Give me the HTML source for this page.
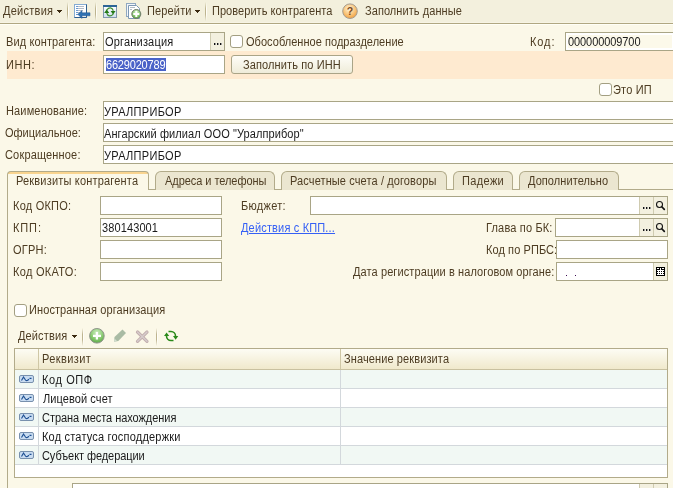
<!DOCTYPE html>
<html><head><meta charset="utf-8">
<style>
*{margin:0;padding:0;box-sizing:border-box}
html,body{width:673px;height:488px;overflow:hidden;background:#fbf8e8}
body{position:relative;font:11px/13px "Liberation Sans",sans-serif;color:#4d3c22}
.a{position:absolute}
.t{position:absolute;white-space:pre;line-height:15px;font-size:12px;transform:scaleX(.917);transform-origin:0 0}
.k{color:#1a1a1a}
.inp{position:absolute;background:#fff;border:1px solid #a9a586}
.btn3{position:absolute;background:#f3f0df;border-left:1px solid #cfcbb0}
.dots{position:absolute;width:8px;height:2px;background:
 linear-gradient(90deg,#111 0 1px,#999 1px 2px,transparent 2px 3px,#111 3px 4px,#999 4px 5px,transparent 5px 6px,#111 6px 7px,#999 7px 8px)}
.cb{position:absolute;width:13px;height:13px;border:1px solid #a39f82;border-radius:3px;background:#fff}
.sep{position:absolute;width:2px;background:linear-gradient(90deg,#bdb48f 0 1px,#fffef8 1px 2px);-webkit-mask-image:linear-gradient(transparent,#000 35%,#000 65%,transparent);mask-image:linear-gradient(transparent,#000 35%,#000 65%,transparent)}
.tri{position:absolute;width:5px;height:3px;background:linear-gradient(#3b2a10,#3b2a10) 0 0/5px 1px no-repeat,linear-gradient(#3b2a10,#3b2a10) 1px 1px/3px 1px no-repeat,linear-gradient(#3b2a10,#3b2a10) 2px 2px/1px 1px no-repeat}
.tab{position:absolute;top:171px;height:19px;border:1px solid #b2ab8a;border-bottom:none;border-radius:6px 6px 0 0;background:#ebe6d0}
</style></head><body>

<!-- top toolbar -->
<div class="a" style="left:0;top:0;width:673px;height:22px;background:#f3f0dd"></div>
<div class="a" style="left:0;top:22px;width:673px;height:1px;background:#f7f4e4"></div>
<div class="a" style="left:0;top:23px;width:673px;height:1px;background:#b0a781"></div>
<div class="a" style="left:0;top:24px;width:673px;height:1px;background:#fffff6"></div>

<div class="t" style="left:3px;top:4px;letter-spacing:0.28px">Действия</div>
<div class="tri" style="left:57px;top:10px"></div>
<div class="sep" style="left:67px;top:2px;height:19px"></div>
<div class="sep" style="left:95px;top:2px;height:19px"></div>
<div class="t" style="left:147px;top:4px;letter-spacing:0.16px">Перейти</div>
<div class="tri" style="left:195px;top:10px"></div>
<div class="sep" style="left:205px;top:2px;height:19px"></div>
<div class="t" style="left:212px;top:4px;letter-spacing:0.05px">Проверить контрагента</div>
<div class="t" style="left:365px;top:4px;letter-spacing:0.07px">Заполнить данные</div>

<!-- header fields -->
<div class="a" style="left:7px;top:51px;width:666px;height:28px;background:#feead0"></div>
<div class="t" style="left:6px;top:35px;letter-spacing:0.13px">Вид контрагента:</div>
<div class="inp" style="left:103px;top:32px;width:122px;height:19px"></div>
<div class="t k" style="left:105px;top:35px;letter-spacing:0.2px">Организация</div>
<div class="btn3" style="left:210px;top:33px;width:14px;height:17px"></div>
<div class="dots" style="left:214px;top:43px"></div>
<div class="cb" style="left:230px;top:35px"></div>
<div class="t" style="left:246px;top:35px;letter-spacing:0.04px">Обособленное подразделение</div>
<div class="t" style="left:530px;top:35px;letter-spacing:0.98px">Код:</div>
<div class="inp" style="left:565px;top:32px;width:120px;height:19px;border-width:1px"></div>
<div class="a" style="left:568px;top:35px;width:104px;height:13px;background:#fcf9ea"></div>
<div class="t k" style="left:568px;top:35px;letter-spacing:-0.09px">000000009700</div>

<div class="t" style="left:6px;top:58px;letter-spacing:0.65px">ИНН:</div>
<div class="inp" style="left:103px;top:55px;width:122px;height:19px"></div>
<div class="a" style="left:106px;top:58px;width:60px;height:13px;background:#4a62c8"></div>
<div class="t" style="left:106px;top:58px;color:#fff;letter-spacing:-0.2px">6629020789</div>
<div class="a" style="left:231px;top:55px;width:122px;height:19px;border:1px solid #aaa487;border-radius:3px;background:linear-gradient(#fefdf8,#efecd9)"></div>
<div class="t" style="left:243px;top:58px;letter-spacing:0.13px">Заполнить по ИНН</div>

<div class="cb" style="left:599px;top:83px"></div>
<div class="t" style="left:613px;top:83px;letter-spacing:0.2px">Это ИП</div>

<div class="t" style="left:6px;top:104px;letter-spacing:0.16px">Наименование:</div>
<div class="inp" style="left:103px;top:101px;width:580px;height:19px"></div>
<div class="t k" style="left:104px;top:105px;letter-spacing:0.33px">УРАЛПРИБОР</div>
<div class="t" style="left:5px;top:126px">Официальное:</div>
<div class="inp" style="left:103px;top:123px;width:580px;height:19px"></div>
<div class="t k" style="left:104px;top:127px;letter-spacing:0.09px">Ангарский филиал ООО "Уралприбор"</div>
<div class="t" style="left:5px;top:148px;letter-spacing:0.18px">Сокращенное:</div>
<div class="inp" style="left:103px;top:145px;width:580px;height:19px"></div>
<div class="t k" style="left:104px;top:149px;letter-spacing:0.33px">УРАЛПРИБОР</div>

<!-- tabs -->
<div class="a" style="left:7px;top:189px;width:666px;height:1px;background:#b2ab8a"></div>
<div class="a" style="left:7px;top:176px;width:1px;height:312px;background:#b2ab8a"></div>
<div class="tab" style="left:155px;width:120px"></div>
<div class="tab" style="left:281px;width:166px"></div>
<div class="tab" style="left:453px;width:60px"></div>
<div class="tab" style="left:519px;width:100px"></div>
<div class="tab" style="left:7px;width:142px;height:19px;border-radius:4px 4px 0 0;background:linear-gradient(#f9d48f 0 2px,#fbf8e8 2px)"></div>
<div class="t" style="left:16px;top:174px;letter-spacing:0.2px">Реквизиты контрагента</div>
<div class="t" style="left:165px;top:174px;letter-spacing:-0.06px">Адреса и телефоны</div>
<div class="t" style="left:290px;top:174px;letter-spacing:0.12px">Расчетные счета / договоры</div>
<div class="t" style="left:462px;top:174px;letter-spacing:0.39px">Падежи</div>
<div class="t" style="left:528px;top:174px;letter-spacing:0.08px">Дополнительно</div>

<!-- page 1 fields -->
<div class="t" style="left:13px;top:199px;letter-spacing:0.25px">Код ОКПО:</div>
<div class="inp" style="left:100px;top:196px;width:122px;height:19px"></div>
<div class="t" style="left:13px;top:221px;letter-spacing:0.98px">КПП:</div>
<div class="inp" style="left:100px;top:218px;width:122px;height:19px"></div>
<div class="t k" style="left:102px;top:221px;letter-spacing:0.12px">380143001</div>
<div class="t" style="left:13px;top:243px;letter-spacing:0.25px">ОГРН:</div>
<div class="inp" style="left:100px;top:240px;width:122px;height:19px"></div>
<div class="t" style="left:13px;top:265px;letter-spacing:0.33px">Код ОКАТО:</div>
<div class="inp" style="left:100px;top:262px;width:122px;height:19px"></div>

<div class="t" style="left:241px;top:199px;letter-spacing:0.33px">Бюджет:</div>
<div class="inp" style="left:310px;top:196px;width:358px;height:19px"></div>
<div class="btn3" style="left:639px;top:197px;width:14px;height:17px"></div>
<div class="btn3" style="left:653px;top:197px;width:14px;height:17px"></div>
<div class="dots" style="left:643px;top:207px"></div>
<div class="t" style="left:241px;top:221px;color:#3560f5;text-decoration:underline;letter-spacing:0.18px">Действия с КПП...</div>

<div class="t" style="left:486px;top:221px;letter-spacing:0.18px">Глава по БК:</div>
<div class="inp" style="left:555px;top:218px;width:113px;height:19px"></div>
<div class="btn3" style="left:639px;top:219px;width:14px;height:17px"></div>
<div class="btn3" style="left:653px;top:219px;width:14px;height:17px"></div>
<div class="dots" style="left:643px;top:229px"></div>
<div class="t" style="left:486px;top:243px;letter-spacing:0.09px">Код по РПБС:</div>
<div class="inp" style="left:556px;top:240px;width:112px;height:19px"></div>
<div class="t" style="left:353px;top:265px;letter-spacing:0.11px">Дата регистрации в налоговом органе:</div>
<div class="inp" style="left:556px;top:262px;width:112px;height:19px"></div>
<div class="btn3" style="left:653px;top:263px;width:14px;height:17px"></div>

<div class="cb" style="left:14px;top:304px"></div>
<div class="t" style="left:29px;top:303px;letter-spacing:0.1px">Иностранная организация</div>

<!-- table toolbar -->
<div class="t" style="left:18px;top:329px;letter-spacing:0.14px">Действия</div>
<div class="tri" style="left:72px;top:335px"></div>
<div class="sep" style="left:82px;top:328px;height:18px"></div>
<div class="sep" style="left:156px;top:328px;height:18px"></div>

<!-- table -->
<div class="a" style="left:14px;top:348px;width:654px;height:130px;border:1px solid #b2ab8a;background:#fff"></div>
<div class="a" style="left:15px;top:349px;width:652px;height:21px;background:linear-gradient(#fdfcf4,#f0e9cc);border-bottom:1px solid #c9c1a0"></div>
<div class="a" style="left:38px;top:349px;width:1px;height:20px;background:#cfc7a6"></div>
<div class="a" style="left:340px;top:349px;width:1px;height:20px;background:#cfc7a6"></div>
<div class="t" style="left:42px;top:352px;letter-spacing:0.42px">Реквизит</div>
<div class="t" style="left:344px;top:352px;letter-spacing:0.12px">Значение реквизита</div>
<div class="a" style="left:15px;top:370px;width:652px;height:18px;background:#f1f8f4"></div>
<div class="a" style="left:15px;top:388px;width:652px;height:1px;background:#d3d8dc"></div>
<div class="a" style="left:38px;top:370px;width:1px;height:18px;background:#d3d8dc"></div>
<div class="a" style="left:340px;top:370px;width:1px;height:18px;background:#d3d8dc"></div>
<div class="t k" style="left:42px;top:373px;letter-spacing:0.65px">Код ОПФ</div>
<div class="a" style="left:15px;top:389px;width:652px;height:18px;background:#ffffff"></div>
<div class="a" style="left:15px;top:407px;width:652px;height:1px;background:#d3d8dc"></div>
<div class="a" style="left:38px;top:389px;width:1px;height:18px;background:#d3d8dc"></div>
<div class="a" style="left:340px;top:389px;width:1px;height:18px;background:#d3d8dc"></div>
<div class="t k" style="left:43px;top:392px;letter-spacing:0.09px">Лицевой счет</div>
<div class="a" style="left:15px;top:408px;width:652px;height:18px;background:#f1f8f4"></div>
<div class="a" style="left:15px;top:426px;width:652px;height:1px;background:#d3d8dc"></div>
<div class="a" style="left:38px;top:408px;width:1px;height:18px;background:#d3d8dc"></div>
<div class="a" style="left:340px;top:408px;width:1px;height:18px;background:#d3d8dc"></div>
<div class="t k" style="left:42px;top:411px;letter-spacing:-0.05px">Страна места нахождения</div>
<div class="a" style="left:15px;top:427px;width:652px;height:18px;background:#ffffff"></div>
<div class="a" style="left:15px;top:445px;width:652px;height:1px;background:#d3d8dc"></div>
<div class="a" style="left:38px;top:427px;width:1px;height:18px;background:#d3d8dc"></div>
<div class="a" style="left:340px;top:427px;width:1px;height:18px;background:#d3d8dc"></div>
<div class="t k" style="left:42px;top:430px;letter-spacing:0.21px">Код статуса господдержки</div>
<div class="a" style="left:15px;top:446px;width:652px;height:18px;background:#f1f8f4"></div>
<div class="a" style="left:15px;top:464px;width:652px;height:1px;background:#d3d8dc"></div>
<div class="a" style="left:38px;top:446px;width:1px;height:18px;background:#d3d8dc"></div>
<div class="a" style="left:340px;top:446px;width:1px;height:18px;background:#d3d8dc"></div>
<div class="t k" style="left:42px;top:449px;letter-spacing:-0.08px">Субъект федерации</div>

<!-- bottom field -->
<div class="inp" style="left:72px;top:483px;width:596px;height:10px"></div>
<div class="btn3" style="left:639px;top:484px;width:14px;height:10px"></div>
<div class="btn3" style="left:653px;top:484px;width:14px;height:10px"></div>
<svg class="a" style="left:0;top:0" width="673" height="488" viewBox="0 0 673 488">
<defs>
<linearGradient id="gwin" x1="0" y1="0" x2="0" y2="1"><stop offset="0" stop-color="#ffffff"/><stop offset="1" stop-color="#cfdff0"/></linearGradient>
<radialGradient id="gq" cx="0.45" cy="0.35" r="0.65"><stop offset="0" stop-color="#fff4dc"/><stop offset="0.6" stop-color="#f9c57a"/><stop offset="1" stop-color="#f0a040"/></radialGradient>
<radialGradient id="gg" cx="0.5" cy="0.3" r="0.7"><stop offset="0" stop-color="#d2efc6"/><stop offset="0.6" stop-color="#8acb72"/><stop offset="1" stop-color="#5daa47"/></radialGradient>
</defs>
<!-- icon1 doc+arrow -->
<rect x="74.5" y="4.5" width="12" height="13" fill="#fff" stroke="#86acd2"/>
<path d="M86.5 4.5 V17.5 H74.5" fill="none" stroke="#2f5f8f"/>
<g stroke-width="1">
<path d="M76 6.5h2M76 8.5h2M76 10.5h2M76 12.5h2M76 14.5h2" stroke="#6a9ad0"/>
<path d="M78 6.5h6M78 8.5h6M78 10.5h5M78 12.5h2" stroke="#b4bcc6"/>
</g>
<path d="M77.8 14.3 L82 10.6 V12.8 H90 V15.8 H82 V18.4 Z" fill="#2f72b2" stroke="#24598e" stroke-width="0.5"/>
<!-- icon2 window -->
<rect x="103.5" y="5.5" width="13" height="12" fill="url(#gwin)" stroke="#8197ad"/>
<rect x="103" y="5" width="14" height="2" fill="#2d6596"/>
<path d="M106.8 10 Q108.5 7.6 110.5 7.9 Q112.5 8.2 113.3 10.8 M113.2 14 Q111.5 16.2 109.5 15.9 Q107.5 15.6 106.7 13" fill="none" stroke="#3f8f30" stroke-width="1.2"/>
<path d="M104.2 12.9 H109.2 L106.7 9.3 Z M110.6 10.9 H115.6 L113.1 14.5 Z" fill="#267a18"/>
<!-- icon3 copy + plus -->
<rect x="126.5" y="3.5" width="9" height="13" fill="#f3f6fa" stroke="#90a8c0"/>
<path d="M128.5 5.5 H136.5 L139.5 8.5 V18.5 H128.5 Z" fill="#fff" stroke="#7c98b4"/>
<path d="M130 7.5h5M130 9.5h2" stroke="#b4bcc6"/>
<circle cx="136.3" cy="14" r="4.5" fill="url(#gg)" stroke="#6f7a6a"/>
<path d="M133.3 14h6M136.3 11v6" stroke="#fff" stroke-width="2"/>
<!-- question -->
<circle cx="350" cy="11.2" r="7.3" fill="url(#gq)" stroke="#a49c90"/>
<text x="350" y="14.8" text-anchor="middle" font-family="Liberation Sans" font-weight="bold" font-size="10.5" fill="#7b4a20">?</text>
<!-- table toolbar -->
<circle cx="96.9" cy="335.8" r="7.3" fill="url(#gg)" stroke="#8f948a"/>
<path d="M93 335.8h8M96.9 332v7.6" stroke="#fff" stroke-width="2.2"/>
<path d="M114 341.7 L114.5 337 L122.5 329.5 L126 333 L118.3 341 Z" fill="#a9bba4"/>
<path d="M114 341.7 L114.5 338.5 L117 341 Z" fill="#d4dfd0"/>
<path d="M137.5 332 L147 341.3 M147 332 L137.5 341.3" stroke="#c2aeae" stroke-width="3.2" stroke-linecap="round"/>
<path d="M137.5 332 L147 341.3 M147 332 L137.5 341.3" stroke="#d6cccc" stroke-width="1.3" stroke-linecap="round"/>
<path d="M168.5 331.5 H171 A4.5 4.5 0 0 1 175.5 336 M173.5 340.5 H171 A4.5 4.5 0 0 1 166.5 336" fill="none" stroke="#2a8a1a" stroke-width="1.6"/>
<path d="M173 336 H178.3 L175.6 339.8 Z M164 336 H169.2 L166.6 332.4 Z" fill="#2a8a1a"/>
<!-- magnifiers -->
<circle cx="659.5" cy="204.5" r="3" fill="none" stroke="#111" stroke-width="1.05"/>
<path d="M662 207 L664.3 209.3" stroke="#111" stroke-width="1.7" stroke-linecap="round"/>
<circle cx="659.5" cy="226.5" r="3" fill="none" stroke="#111" stroke-width="1.05"/>
<path d="M662 229 L664.3 231.3" stroke="#111" stroke-width="1.7" stroke-linecap="round"/>
<!-- calendar -->
<rect x="656" y="267" width="9" height="9" fill="#000"/>
<rect x="657" y="268" width="2" height="1" fill="#fff"/><rect x="662" y="268" width="2" height="1" fill="#fff"/><rect x="660" y="268" width="1" height="2" fill="#fff"/>
<rect x="657" y="270" width="7" height="5" fill="#fff"/>
<rect x="659" y="271" width="1" height="1" fill="#000"/><rect x="661" y="271" width="1" height="1" fill="#000"/>
<rect x="659" y="273" width="1" height="1" fill="#000"/><rect x="661" y="273" width="1" height="1" fill="#000"/>
<rect x="657" y="271" width="1" height="1" fill="#000"/><rect x="663" y="271" width="1" height="1" fill="#000"/>
<rect x="657" y="273" width="1" height="1" fill="#000"/><rect x="663" y="273" width="1" height="1" fill="#000"/>
<rect x="566" y="275" width="1" height="1" fill="#3a0a50"/><rect x="575" y="275" width="1" height="1" fill="#3a0a50"/>
<rect x="19.5" y="375.5" width="14" height="7" rx="1.5" fill="#c9dcf1" stroke="#7890ad"/>
<path d="M21.5 380.5 L23.5 377 L25.5 380 Q26.5 381.3 28 380 L29 379.2 M29.5 378.3 L31.5 378.3" fill="none" stroke="#1d4f92" stroke-width="1.15"/>
<rect x="19.5" y="394.5" width="14" height="7" rx="1.5" fill="#c9dcf1" stroke="#7890ad"/>
<path d="M21.5 399.5 L23.5 396 L25.5 399 Q26.5 400.3 28 399 L29 398.2 M29.5 397.3 L31.5 397.3" fill="none" stroke="#1d4f92" stroke-width="1.15"/>
<rect x="19.5" y="413.5" width="14" height="7" rx="1.5" fill="#c9dcf1" stroke="#7890ad"/>
<path d="M21.5 418.5 L23.5 415 L25.5 418 Q26.5 419.3 28 418 L29 417.2 M29.5 416.3 L31.5 416.3" fill="none" stroke="#1d4f92" stroke-width="1.15"/>
<rect x="19.5" y="432.5" width="14" height="7" rx="1.5" fill="#c9dcf1" stroke="#7890ad"/>
<path d="M21.5 437.5 L23.5 434 L25.5 437 Q26.5 438.3 28 437 L29 436.2 M29.5 435.3 L31.5 435.3" fill="none" stroke="#1d4f92" stroke-width="1.15"/>
<rect x="19.5" y="451.5" width="14" height="7" rx="1.5" fill="#c9dcf1" stroke="#7890ad"/>
<path d="M21.5 456.5 L23.5 453 L25.5 456 Q26.5 457.3 28 456 L29 455.2 M29.5 454.3 L31.5 454.3" fill="none" stroke="#1d4f92" stroke-width="1.15"/>
</svg>
</body></html>
